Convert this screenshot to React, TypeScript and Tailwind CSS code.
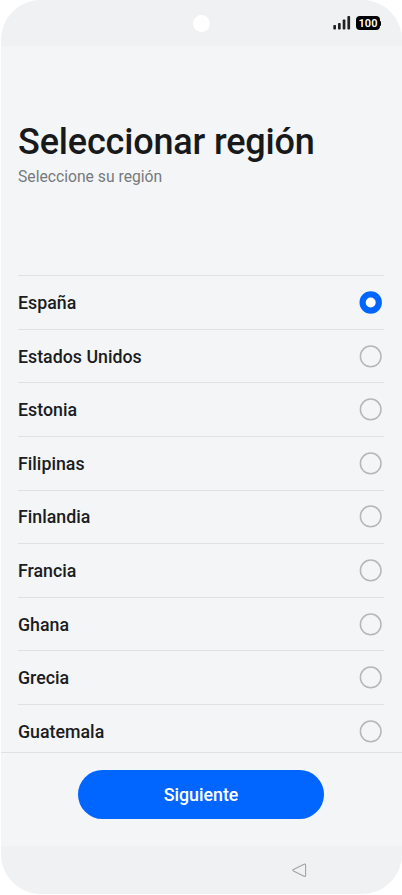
import React from 'react';

const regions = [
  'España',
  'Estados Unidos',
  'Estonia',
  'Filipinas',
  'Finlandia',
  'Francia',
  'Ghana',
  'Grecia',
  'Guatemala',
];

const StatusBar: React.FC = () => {
  return (
    <header className="relative h-[46px] shrink-0 bg-[#eff1f3] flex items-center justify-end pr-[21px] gap-[5px]">
      <div className="absolute left-[192px] top-[15px] size-[17px] rounded-full bg-white" />
      <svg width="18" height="14" viewBox="0 0 18 14" fill="#222" className="block">
        <rect x="0.3" y="9" width="2.7" height="4.5" rx="0.8" />
        <rect x="5" y="7" width="2.7" height="6.5" rx="0.8" />
        <rect x="9.7" y="3.5" width="2.7" height="10" rx="0.8" />
        <rect x="14.4" y="0" width="2.7" height="13.5" rx="0.8" />
      </svg>
      <div className="flex items-center">
        <span className="w-[24px] h-[14px] rounded-[4px] bg-black text-white text-[11px] leading-[15px] font-semibold text-center">
          100
        </span>
        <span className="w-px h-[5px] rounded-r-sm bg-black" />
      </div>
    </header>
  );
};

const Radio: React.FC<{ checked: boolean }> = ({ checked }) => {
  return (
    <svg width="23" height="23" viewBox="0 0 23 23" fill="none">
      {checked ? (
        <>
          <circle cx="11.7" cy="11.5" r="11.2" fill="#0066ff" />
          <circle cx="11.7" cy="11.5" r="5" fill="#fff" />
        </>
      ) : (
        <circle cx="11.7" cy="11.4" r="10.3" stroke="#b6b7b9" strokeWidth="1.5" />
      )}
    </svg>
  );
};

const App: React.FC = () => {
  const [selected, setSelected] = React.useState('España');

  return (
    <div className="h-[895px] w-[402px] bg-white pl-px pb-px font-['Roboto',sans-serif] overflow-hidden">
      <div className="h-full flex flex-col rounded-[40px] overflow-hidden bg-[#f3f5f7]">
        <StatusBar />

        <div className="h-[229.3px] shrink-0 px-[17px] pt-[75px]">
          <h1 className="text-[36px] leading-[42px] tracking-[-0.16px] font-medium text-[#18191b] whitespace-nowrap">
            Seleccionar región
          </h1>
          <p className="mt-[4px] text-[15.7px] leading-[20px] text-[#77797c]">Seleccione su región</p>
        </div>

        <ul className="h-[476.7px] shrink-0 overflow-hidden pl-[17px] pr-[18px]">
          {regions.map((region) => (
            <li
              key={region}
              onClick={() => setSelected(region)}
              className="h-[53.6px] border-t border-[#dfe1e3] flex items-center justify-between pr-[2px]"
            >
              <span className="pt-[1px] text-[17.8px] leading-[22px] font-medium text-[#1b1c1e]">{region}</span>
              <Radio checked={region === selected} />
            </li>
          ))}
        </ul>

        <div className="h-[94px] shrink-0 border-t border-[#dfe1e3] pt-[17px] pr-[2px] flex justify-center items-start">
          <button className="w-[246px] h-[49px] rounded-[24.5px] bg-[#0066ff] text-white text-[17.8px] font-medium pt-px pl-px">
            Siguiente
          </button>
        </div>

        <nav className="flex-1 bg-[#eff1f3] flex justify-end items-center pt-px pr-[95px]">
          <svg width="15" height="15" viewBox="0 0 15 15" fill="none" stroke="#a2a3a5" strokeWidth="1.1" strokeLinejoin="round">
            <path d="M1.4 6.6 12.1 1.2Q13.6.7 13.6 2.2V12.3Q13.6 13.8 12.1 13.2L1.4 7.9Q.2 7.2 1.4 6.6Z" />
          </svg>
        </nav>
      </div>
    </div>
  );
};

export default App;
